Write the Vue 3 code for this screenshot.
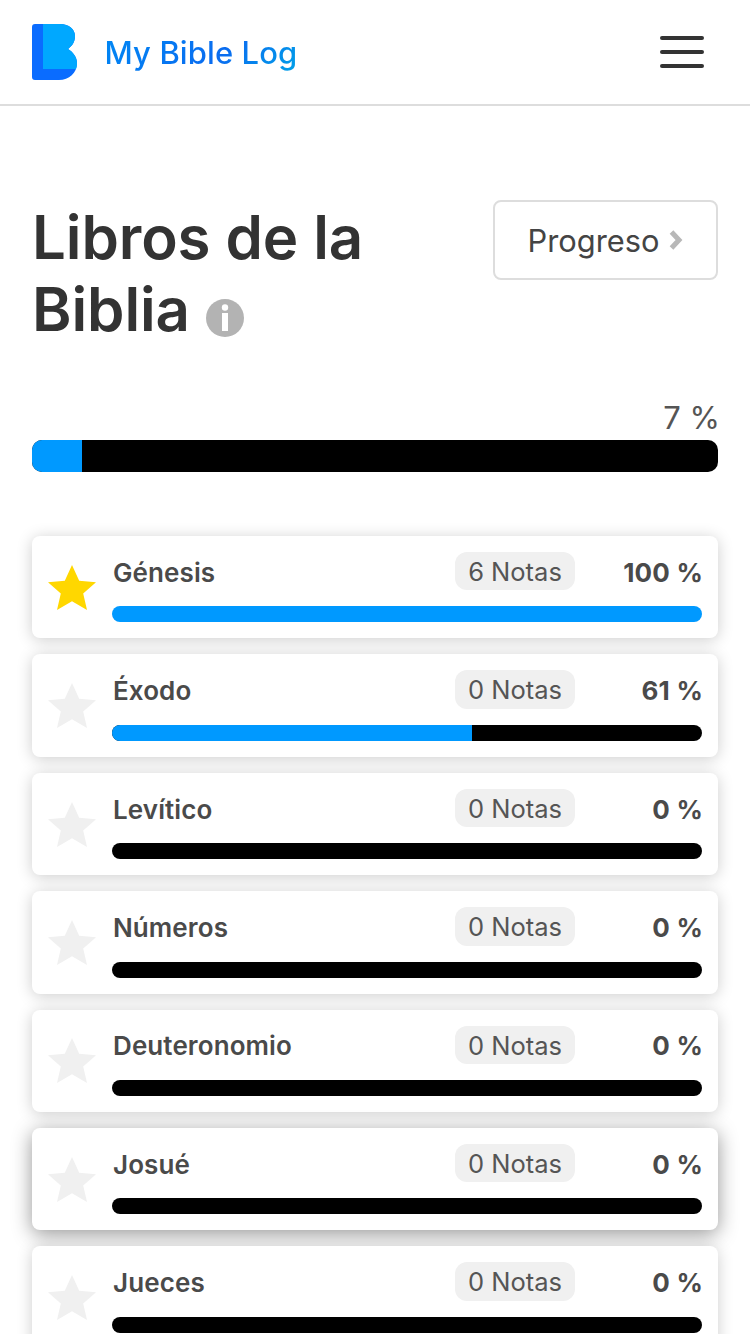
<template>
  <div class="page">
    <header class="topbar">
      <div class="brand">
        <svg class="logo" width="46" height="56" viewBox="0 0 46 56">
          <path fill="#0a6cff" d="M3 0H28C37 0 43 5 43 12C43 18 40 22 36 25C41 28 45 33 45 39C45 49 37 56 27 56H3Q0 56 0 53V3Q0 0 3 0Z" />
          <path fill="#00a8ff" d="M11 0H28C37 0 43 5 43 12C43 18 40 22 36 25C41 28 45 33 45 39C45 41 44.8 43 44 45H11Z" />
        </svg>
        <span class="brand-name">My Bible Log</span>
      </div>
      <button class="menu-btn" aria-label="Menu">
        <span></span>
        <span></span>
        <span></span>
      </button>
    </header>

    <main class="content">
      <div class="title-row">
        <h1 class="title">
          Libros de la Biblia
          <svg class="info" width="38" height="38" viewBox="0 0 38 38">
            <circle cx="19" cy="19" r="19" fill="#b3b3b3" />
            <circle cx="19" cy="8.5" r="3.2" fill="#fff" />
            <rect x="16" y="14" width="6" height="18" fill="#fff" />
          </svg>
        </h1>
        <button class="progress-btn">
          Progreso
          <svg width="14" height="20" viewBox="0 0 14 20">
            <path d="M2.5 2L10 10L2.5 18" fill="none" stroke="#b8b8b8" stroke-width="5" />
          </svg>
        </button>
      </div>

      <div class="total">
        <div class="total-label">7 %</div>
        <div class="bar bar-big">
          <div class="bar-fill" style="width: 7.3%"></div>
        </div>
      </div>

      <ul class="books">
        <li v-for="book in books" :key="book.name" :class="['book', { raised: book.raised }]">
          <svg class="star" width="48" height="45" viewBox="0 0 48 45">
            <path
              :fill="book.starred ? '#ffd700' : '#f0f0f0'"
              d="M24 0L31.2 15.8L48 17.2L35.2 28.4L39 45L24 36.2L9 45L12.8 28.4L0 17.2L16.8 15.8Z"
            />
          </svg>
          <div class="book-body">
            <div class="book-head">
              <span class="book-name">{{ book.name }}</span>
              <span class="notes">{{ book.notes }} Notas</span>
              <span class="percent">{{ book.percent }} %</span>
            </div>
            <div class="bar">
              <div class="bar-fill" :style="{ width: book.percent + '%' }"></div>
            </div>
          </div>
        </li>
      </ul>
    </main>
  </div>
</template>

<script setup>
const books = [
  { name: 'Génesis', notes: 6, percent: 100, starred: true },
  { name: 'Éxodo', notes: 0, percent: 61 },
  { name: 'Levítico', notes: 0, percent: 0 },
  { name: 'Números', notes: 0, percent: 0 },
  { name: 'Deuteronomio', notes: 0, percent: 0 },
  { name: 'Josué', notes: 0, percent: 0, raised: true },
  { name: 'Jueces', notes: 0, percent: 0 }
]
</script>

<style>
html,
body {
  background: #fff;
}
</style>

<style scoped>
.page {
  height: 100vh;
  overflow: hidden;
  font-family: Inter, "Liberation Sans", sans-serif;
  color: #444;
}

.topbar {
  display: flex;
  align-items: center;
  justify-content: space-between;
  height: 104px;
  padding: 0 46px 0 32px;
  border-bottom: 2px solid #ddd;
}

.brand {
  display: flex;
  align-items: center;
  gap: 26.5px;
}

.brand-name {
  font-size: 31px;
  font-weight: 500;
  letter-spacing: 0.1px;
  background: linear-gradient(135deg, #0088f4, #0a6cf0 60%, #00a0e8);
  -webkit-background-clip: text;
  background-clip: text;
  color: transparent;
}

.menu-btn {
  display: flex;
  flex-direction: column;
  gap: 10px;
  width: 44px;
  padding: 0;
  border: none;
  background: none;
}

.menu-btn span {
  height: 4px;
  background: #333;
  border-radius: 2px;
}

.content {
  padding: 94px 32px 0;
}

.title-row {
  display: flex;
  align-items: flex-start;
  justify-content: space-between;
}

.title {
  width: 400px;
  margin: 0;
  padding-top: 1px;
  font-size: 60px;
  font-weight: 600;
  line-height: 72px;
  letter-spacing: -0.1px;
  color: #333;
}

.info {
  margin-left: 1px;
  vertical-align: -6px;
}

.progress-btn {
  display: flex;
  align-items: center;
  justify-content: center;
  gap: 10px;
  width: 225px;
  height: 80px;
  border: 2px solid #ddd;
  border-radius: 8px;
  background: #fff;
  font-family: inherit;
  font-size: 30.8px;
  color: #444;
}

.total {
  margin-top: 55px;
}

.total-label {
  margin: 0 -2px 4px 0;
  font-size: 31px;
  line-height: 36px;
  text-align: right;
  color: #555;
}

.bar {
  height: 16px;
  border-radius: 8px;
  background: #000;
  overflow: hidden;
}

.bar-big {
  height: 32px;
  border-radius: 10px;
}

.bar-fill {
  height: 100%;
  background: #0099ff;
}

.books {
  display: flex;
  flex-direction: column;
  gap: 16px;
  margin: 64px 0 0;
  padding: 0;
  list-style: none;
}

.book {
  display: flex;
  align-items: center;
  gap: 16px;
  padding: 16px;
  border-radius: 8px;
  background: #fff;
  box-shadow: 0 2px 16px rgba(0, 0, 0, 0.2);
}

.book.raised {
  box-shadow: 0 4px 20px rgba(0, 0, 0, 0.42);
}

.star {
  flex: none;
}

.book-body {
  flex: 1;
  display: flex;
  flex-direction: column;
  gap: 16px;
}

.book-head {
  display: flex;
  align-items: center;
}

.book-name {
  flex: 1;
  margin: 2px 0 0 1px;
  font-size: 26px;
  font-weight: 600;
  letter-spacing: 0.1px;
  color: #4a4a4a;
}

.notes {
  width: 120px;
  padding: 4px 0 2px;
  border-radius: 12px;
  background: #f0f0f0;
  font-size: 25.5px;
  line-height: 32.4px;
  text-align: center;
  color: #555;
}

.percent {
  width: 128px;
  margin: 2px -1px 0 0;
  font-size: 26px;
  font-weight: 700;
  letter-spacing: 0.2px;
  text-align: right;
  color: #4a4a4a;
}
</style>
